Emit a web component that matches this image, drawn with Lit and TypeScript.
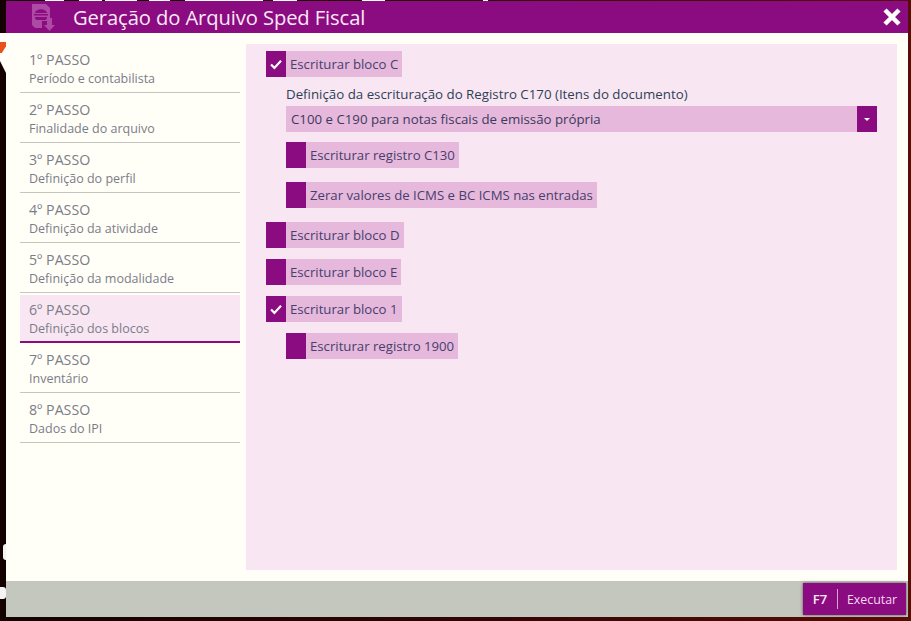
import { LitElement, html, css, svg } from "lit";
import { customElement } from "lit/decorators.js";

const steps = [
  ["1º PASSO", "Período e contabilista"],
  ["2º PASSO", "Finalidade do arquivo"],
  ["3º PASSO", "Definição do perfil"],
  ["4º PASSO", "Definição da atividade"],
  ["5º PASSO", "Definição da modalidade"],
  ["6º PASSO", "Definição dos blocos"],
  ["7º PASSO", "Inventário"],
  ["8º PASSO", "Dados do IPI"],
];

const check = svg`<svg class="tick" viewBox="0 0 20 26" width="20" height="26"><path d="M5 13.5l3.400 3.400L15 9.800" fill="none" stroke="#fff" stroke-width="2.200"/></svg>`;

@customElement("app-root")
export class AppRoot extends LitElement {
  static styles = css`
    :host {
      display: block;
      position: relative;
      width: 911px;
      height: 621px;
      overflow: hidden;
      background: linear-gradient(90deg, #140000 0%, #2a0505 45%, #5a0d04 100%);
      font-family: "Open Sans", "Noto Sans", sans-serif;
      box-sizing: border-box;
      padding: 1px 3px 4px 6px;
    }
    .bit { position: absolute; }
    .top {
      left: 0; top: 0; width: 911px; height: 1px;
      background: linear-gradient(90deg,
        transparent 45px, #fff 45px, #fff 64px, transparent 64px,
        transparent 79px, #fff 79px, #fff 102px, transparent 102px,
        transparent 105px, #fff 105px, #fff 137px, transparent 137px,
        transparent 149px, #fff 149px, #fff 170px, transparent 170px,
        transparent 185px, #fff 185px, #fff 263px, transparent 263px,
        transparent 273px, #fff 273px, #fff 297px, transparent 297px,
        transparent 362px, #fff 362px, #fff 385px, transparent 385px,
        transparent 483px, #fff 483px, #fff 488px, transparent 488px);
    }
    .white { left: 0; top: 33px; width: 6px; height: 40px; background: #fffff8; clip-path: polygon(0 0, 100% 0, 100% 100%, 0 70%); }
    .orange { left: 0; top: 42px; width: 6px; height: 17px; background: #e8501c; clip-path: polygon(0 0, 100% 0, 100% 25%, 30% 65%, 0 65%); }
    .w1 { left: 3px; top: 544px; width: 3px; height: 16px; background: #f4f4f4; border-radius: 3px 0 0 3px; }
    .w2 { left: 0; top: 587px; width: 6px; height: 12px; background: #f4f4f4; border-radius: 0 3px 3px 0; }
    .win { display: flex; flex-direction: column; height: 100%; background: #fffff8; position: relative; }
    .head { height: 32px; flex: none; display: flex; align-items: center; background: #8b0b80; color: #fbe9f7; padding: 0 6px 0 20px; }
    .logo { width: 30px; height: 32px; flex: none; margin-right: 17px; }
    .title { flex: 1; font-size: 20.200px; line-height: 32px; white-space: nowrap; letter-spacing: -0.1px; }
    .close { width: 20px; height: 20px; flex: none; display: block; }
    .body { flex: 1; min-height: 0; display: flex; gap: 6px; padding: 11px 11px 11px 14px; }
    .side { width: 220px; flex: none; margin-top: -1px; }
    .step { height: 42px; border-bottom: 1px solid #c4c7bd; padding: 7px 0 0 9px; color: #7c7c88; display: flex; flex-direction: column; }
    .step.on { background: #f8e7f3; border-bottom: 2px solid #8b0b80; height: 41px; padding-top: 5px; margin-top: 2px; }
    .step b { font-weight: 400; font-size: 14.200px; line-height: 20px; }
    .step span { font-size: 12.500px; line-height: 18px; }
    .panel { flex: 1; background: #f8e7f3; padding: 7px 20px; color: #47406c; font-size: 13.200px; }
    .row { display: flex; width: fit-content; height: 26px; background: #e6b8dc; align-items: center; padding-right: 4px; white-space: nowrap; }
    .box { width: 20px; height: 26px; background: #8b0b80; flex: none; margin-right: 4px; }
    .tick { display: block; }
    .m10 { margin-top: 10px; }
    .m11 { margin-top: 11px; }
    .m14 { margin-top: 14px; }
    .sub { margin-left: 20px; }
    .lbl { margin: 9px 0 0 20px; line-height: 17px; color: #2f3f55; font-size: 13.300px; }
    .select { margin: 3px 0 0 20px; height: 26px; background: #e6b8dc; display: flex; align-items: center; padding-left: 5px; color: #3b3a5c; font-size: 13.250px; }
    .select span { flex: 1; }
    .drop { width: 20px; height: 26px; background: #8b0b80; display: flex; align-items: center; justify-content: center; }
    .drop i { display: block; border: 3px solid transparent; border-top: 3px solid #fff; border-bottom: 0; }
    .foot { height: 36px; flex: none; background: #c4c7bd; display: flex; justify-content: flex-end; align-items: center; padding-right: 2px; }
    .run { width: 103px; height: 32px; background: #8b0b80; box-shadow: 0 0 3px #555; display: flex; align-items: center; color: #f6d8ef; font-size: 12.400px; }
    .run b { width: 34px; text-align: center; color: #fbe9f7; font-size: 13px; font-weight: 600; border-right: 1px solid #d9a3d2; line-height: 20px; flex: none; }
    .run span { flex: 1; text-align: center; }
  `;

  private row(text: string, on: boolean, cls: string) {
    return html`<div class="row ${cls}"><div class="box">${on ? check : ""}</div>${text}</div>`;
  }

  render() {
    return html`
      <div class="bit top"></div><div class="bit white"></div><div class="bit orange"></div><div class="bit w1"></div><div class="bit w2"></div>
      <div class="win">
        <div class="head">
          <svg class="logo" viewBox="0 0 30 32">
            <g fill="#ad4aa3">
              <path d="M6 3h14l4 4v13H6z"/>
              <path d="M6 20h10v7H9l-3-3z"/>
              <path d="M21 17h5v7h3l-5.500 6-5.500-6h3z"/>
            </g>
            <g fill="#8b0b80">
              <path d="M9 12c1-5 11-5 12 0z"/><rect x="8" y="13" width="14" height="1.500"/><path d="M9 16h12c0 2-1 3-2 3h-8c-1 0-2-1-2-3z"/>
            </g>
          </svg>
          <div class="title">Geração do Arquivo Sped Fiscal</div>
          <svg class="close" viewBox="0 0 20 20"><path d="M3 3l14 14M17 3L3 17" stroke="#fff" stroke-width="4.500" fill="none"/></svg>
        </div>
        <div class="body">
          <div class="side">
            ${steps.map((s, i) => html`<div class="step ${i === 5 ? "on" : ""}"><b>${s[0]}</b><span>${s[1]}</span></div>`)}
          </div>
          <div class="panel">
            ${this.row("Escriturar bloco C", true, "")}
            <div class="lbl">Definição da escrituração do Registro C170 (Itens do documento)</div>
            <div class="select"><span>C100 e C190 para notas fiscais de emissão própria</span><div class="drop"><i></i></div></div>
            ${this.row("Escriturar registro C130", false, "sub m10")}
            ${this.row("Zerar valores de ICMS e BC ICMS nas entradas", false, "sub m14")}
            ${this.row("Escriturar bloco D", false, "m14")}
            ${this.row("Escriturar bloco E", false, "m11")}
            ${this.row("Escriturar bloco 1", true, "m11")}
            ${this.row("Escriturar registro 1900", false, "sub m11")}
          </div>
        </div>
        <div class="foot"><div class="run"><b>F7</b><span>Executar</span></div></div>
      </div>
    `;
  }
}
